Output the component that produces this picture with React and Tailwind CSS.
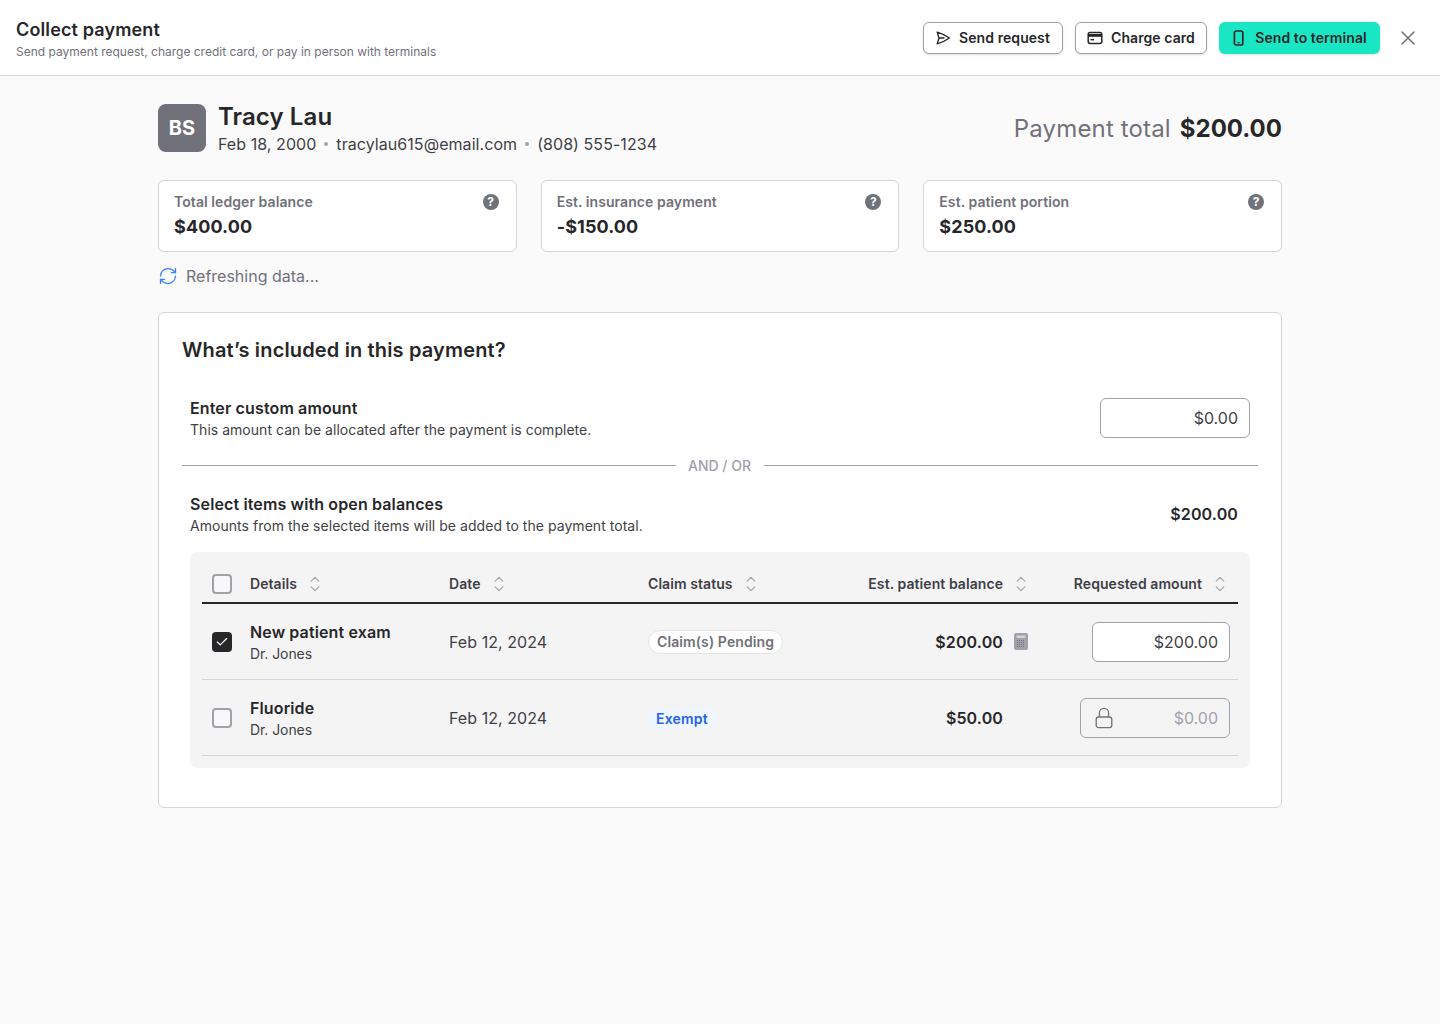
import React from "react";
import { X, RefreshCw, Check } from "lucide-react";

function SendIcon() {
  return (
    <svg width="16" height="16" viewBox="0 0 24 24" fill="none" stroke="#27272a" strokeWidth="2" strokeLinejoin="round" strokeLinecap="round">
      <path d="M6 12 3.27 3.13A59.77 59.77 0 0 1 21.49 12 59.77 59.77 0 0 1 3.27 20.88L6 12Zm0 0h7.5" />
    </svg>
  );
}

function CardIcon() {
  return (
    <svg width="16" height="16" viewBox="0 0 16 16" fill="none">
      <rect x="1.2" y="2.6" width="13.6" height="10.8" rx="1.8" stroke="#27272a" strokeWidth="1.5" />
      <rect x="1.2" y="4" width="13.6" height="2.8" fill="#27272a" />
      <rect x="3.5" y="9" width="3.5" height="1.4" fill="#27272a" />
    </svg>
  );
}

function PhoneIcon() {
  return (
    <svg width="16" height="16" viewBox="0 0 16 16" fill="none">
      <rect x="3.4" y="1" width="8.4" height="14" rx="1.8" stroke="#27272a" strokeWidth="1.7" />
      <path d="M6.4 12.6h2.4" stroke="#27272a" strokeWidth="1.2" />
    </svg>
  );
}

function HelpDot() {
  return (
    <span className="flex h-4 w-4 items-center justify-center rounded-full bg-[#71717a] text-[12px] font-bold leading-none text-white">?</span>
  );
}

function SortIcon() {
  return (
    <svg width="12" height="16" viewBox="0 0 12 16" fill="none" stroke="#a1a1aa" strokeWidth="1.1" strokeLinecap="round" strokeLinejoin="round" className="shrink-0">
      <path d="M2.2 5.2 6 1.4l3.8 3.8" />
      <path d="M2.2 10.8 6 14.6l3.8-3.8" />
    </svg>
  );
}

function CalculatorIcon() {
  return (
    <svg width="14" height="17" viewBox="0 0 14 17" className="shrink-0">
      <rect x="0" y="0" width="14" height="17" rx="2" fill="#a1a1aa" />
      <rect x="2.5" y="2.5" width="9" height="2.5" fill="#d4d4d8" />
      <path d="M3 7.5h8M3 9.5h8M3 11.5h8M3 13.5h8" stroke="#71717a" strokeWidth="1" strokeDasharray="1 1" />
    </svg>
  );
}

function LockIcon() {
  return (
    <svg width="18" height="22" viewBox="0 0 18 22" fill="none" stroke="#71717a" strokeWidth="1.3" strokeLinejoin="round">
      <rect x="1.2" y="10" width="15.6" height="10.6" rx="2.4" />
      <path d="M4.4 10V6a4.6 4.6 0 0 1 9.2 0v4" />
    </svg>
  );
}

function Checkbox({ checked }) {
  if (checked) {
    return (
      <span className="flex h-5 w-5 items-center justify-center rounded-[4px] bg-[#27272a]">
        <Check size={14} color="#fff" strokeWidth={2} />
      </span>
    );
  }
  return <span className="block h-5 w-5 rounded-[4px] border-2 border-[#a1a1aa] bg-white/40" />;
}

function StatCard({ label, value }) {
  return (
    <div className="flex h-[72px] items-start justify-between rounded-md border border-[#d4d4d8] bg-white pl-[15px] pr-[17px] pt-[12px]">
      <div>
        <div className="text-sm font-semibold leading-[18px] tracking-[0.07px] text-[#71717a]">{label}</div>
        <div className="mt-[2px] text-lg font-bold leading-7 tracking-[0.1px] text-[#27272a]">{value}</div>
      </div>
      <div className="pt-[1px]"><HelpDot /></div>
    </div>
  );
}

function Dot() {
  return <span className="h-1 w-1 rounded-full bg-[#a1a1aa]" />;
}

const rowGrid = "grid grid-cols-[48px_199px_199px_170px_212px_1fr] items-center";

function HeadCell({ children, right, pr }) {
  return (
    <div className={`flex items-center gap-3 text-sm font-semibold tracking-[0.07px] text-[#3f3f46] ${right ? "justify-end" : ""} ${pr || ""}`}>
      <span>{children}</span>
      <SortIcon />
    </div>
  );
}

export default function App() {
  return (
    <div className="min-h-[1024px] bg-[#fafafa] font-['Inter',sans-serif] text-[#27272a]">
      <header className="flex h-[76px] items-center justify-between border-b border-[#d4d4d8] bg-white pl-4 pr-5">
        <div className="pt-[3px]">
          <div className="text-lg font-semibold leading-6 tracking-[0.13px] text-[#27272a]">Collect payment</div>
          <div className="mt-[2px] text-xs leading-4 text-[#71717a]">Send payment request, charge credit card, or pay in person with terminals</div>
        </div>
        <div className="flex items-center">
          <button className="flex h-8 w-[140px] items-center justify-center gap-2 rounded-md border border-[#a1a1aa] bg-white pr-[1px] text-sm font-semibold tracking-[0.07px] text-[#27272a] shadow-sm">
            <SendIcon />Send request
          </button>
          <button className="ml-3 flex h-8 w-[132px] items-center justify-center gap-2 rounded-md border border-[#a1a1aa] bg-white text-sm font-semibold tracking-[0.07px] text-[#27272a] shadow-sm">
            <CardIcon />Charge card
          </button>
          <button className="ml-3 flex h-8 w-[161px] items-center justify-center gap-2 rounded-md bg-[#19e6c3] pr-[1px] text-sm font-semibold tracking-[0.07px] text-[#27272a] shadow-sm">
            <PhoneIcon />Send to terminal
          </button>
          <X size={24} strokeWidth={1.5} color="#71717a" className="ml-4" />
        </div>
      </header>

      <main className="mx-auto w-[1124px] pt-7">
        <section className="flex items-start justify-between">
          <div className="flex items-start gap-3">
            <div className="flex h-12 w-12 items-center justify-center rounded-lg bg-[#71717a] text-xl font-bold text-white">BS</div>
            <div>
              <div className="text-2xl font-semibold leading-[26px] tracking-[0.1px] text-[#27272a]">Tracy Lau</div>
              <div className="mt-[2px] flex items-center gap-2 text-base leading-6 tracking-[0.06px] text-[#3f3f46]">
                <span>Feb 18, 2000</span><Dot /><span>tracylau615@email.com</span><Dot /><span>(808) 555-1234</span>
              </div>
            </div>
          </div>
          <div className="flex h-12 items-center gap-[9px] pt-[2px]">
            <span className="text-2xl font-normal tracking-[0.15px] text-[#71717a]">Payment total</span>
            <span className="text-2xl font-bold text-[#27272a]">$200.00</span>
          </div>
        </section>

        <section className="mt-6 grid grid-cols-3 gap-6">
          <StatCard label="Total ledger balance" value="$400.00" />
          <StatCard label="Est. insurance payment" value="-$150.00" />
          <StatCard label="Est. patient portion" value="$250.00" />
        </section>

        <div className="mt-3 flex h-6 items-center gap-2 text-base text-[#71717a]">
          <RefreshCw size={20} strokeWidth={1.5} color="#3b82f6" />
          <span>Refreshing data...</span>
        </div>

        <section className="mt-6 h-[496px] rounded-md border border-[#d4d4d8] bg-white px-[23px] pt-[23px]">
          <h2 className="text-xl font-semibold leading-7 tracking-[0.15px] text-[#27272a]">What’s included in this payment?</h2>

          <div className="mt-[34px] flex items-start justify-between px-2">
            <div>
              <div className="text-base font-semibold leading-5 tracking-[0.13px] text-[#27272a]">Enter custom amount</div>
              <div className="mt-[2px] text-sm leading-5 tracking-[0.03px] text-[#3f3f46]">This amount can be allocated after the payment is complete.</div>
            </div>
            <div className="flex h-10 w-[150px] items-center justify-end rounded-md border border-[#a1a1aa] bg-white pr-[11px] text-base text-[#3f3f46]">$0.00</div>
          </div>

          <div className="mt-4 flex items-center">
            <div className="mb-[2px] h-px flex-1 bg-[#a1a1aa]" />
            <span className="w-[88px] pr-[1px] text-center text-sm font-medium leading-5 text-[#a1a1aa]">AND / OR</span>
            <div className="mb-[2px] h-px flex-1 bg-[#a1a1aa]" />
          </div>

          <div className="mt-[18px] flex items-center justify-between px-2">
            <div>
              <div className="text-base font-semibold leading-5 tracking-[0.13px] text-[#27272a]">Select items with open balances</div>
              <div className="mt-[2px] text-sm leading-5 tracking-[0.04px] text-[#3f3f46]">Amounts from the selected items will be added to the payment total.</div>
            </div>
            <div className="mb-[2px] pr-3 text-base font-semibold tracking-[0.13px] text-[#27272a]">$200.00</div>
          </div>

          <div className="mx-2 mt-4 h-[216px] rounded-lg bg-[#f4f4f5] px-3 pt-3">
            <div className={`${rowGrid} h-10 border-b-2 border-[#27272a] pt-[2px]`}>
              <div className="pl-[10px]"><Checkbox /></div>
              <HeadCell>Details</HeadCell>
              <HeadCell>Date</HeadCell>
              <HeadCell>Claim status</HeadCell>
              <HeadCell right pr="pr-[3px]">Est. patient balance</HeadCell>
              <HeadCell right pr="pr-3">Requested amount</HeadCell>
            </div>

            <div className={`${rowGrid} h-[76px] border-b border-[#d4d4d8]`}>
              <div className="pl-[10px]"><Checkbox checked /></div>
              <div className="pt-[2px]">
                <div className="text-base font-semibold leading-5 tracking-[0.13px] text-[#27272a]">New patient exam</div>
                <div className="mt-[2px] text-sm leading-5 tracking-[-0.08px] text-[#3f3f46]">Dr. Jones</div>
              </div>
              <div className="text-base tracking-[0.06px] text-[#3f3f46]">Feb 12, 2024</div>
              <div>
                <span className="inline-block rounded-full border border-[#e4e4e7] bg-white px-2 text-sm font-semibold leading-[22px] tracking-[0.1px] text-[#71717a]">Claim(s) Pending</span>
              </div>
              <div className="flex items-center justify-end gap-[11px] pr-[2px] text-base font-semibold tracking-[0.13px] text-[#27272a]">
                <span>$200.00</span><CalculatorIcon />
              </div>
              <div className="flex justify-end pr-2">
                <div className="flex h-10 w-[138px] items-center justify-end rounded-md border border-[#a1a1aa] bg-white pr-[11px] text-base text-[#3f3f46]">$200.00</div>
              </div>
            </div>

            <div className={`${rowGrid} h-[76px] border-b border-[#d4d4d8]`}>
              <div className="pl-[10px]"><Checkbox /></div>
              <div className="pt-[2px]">
                <div className="text-base font-semibold leading-5 tracking-[0.13px] text-[#27272a]">Fluoride</div>
                <div className="mt-[2px] text-sm leading-5 tracking-[-0.08px] text-[#3f3f46]">Dr. Jones</div>
              </div>
              <div className="text-base tracking-[0.06px] text-[#3f3f46]">Feb 12, 2024</div>
              <div>
                <span className="inline-block rounded-full bg-[#eff6ff] px-2 text-sm font-semibold leading-[22px] tracking-[0.2px] text-[#2563eb]">Exempt</span>
              </div>
              <div className="flex justify-end pr-[27px] text-base font-semibold tracking-[0.13px] text-[#27272a]">$50.00</div>
              <div className="flex justify-end pr-2">
                <div className="flex h-10 w-[150px] items-center justify-between rounded-md border border-[#a1a1aa] pl-[14px] pr-[11px] text-base text-[#a1a1aa]">
                  <LockIcon /><span>$0.00</span>
                </div>
              </div>
            </div>
          </div>
        </section>
      </main>
    </div>
  );
}
